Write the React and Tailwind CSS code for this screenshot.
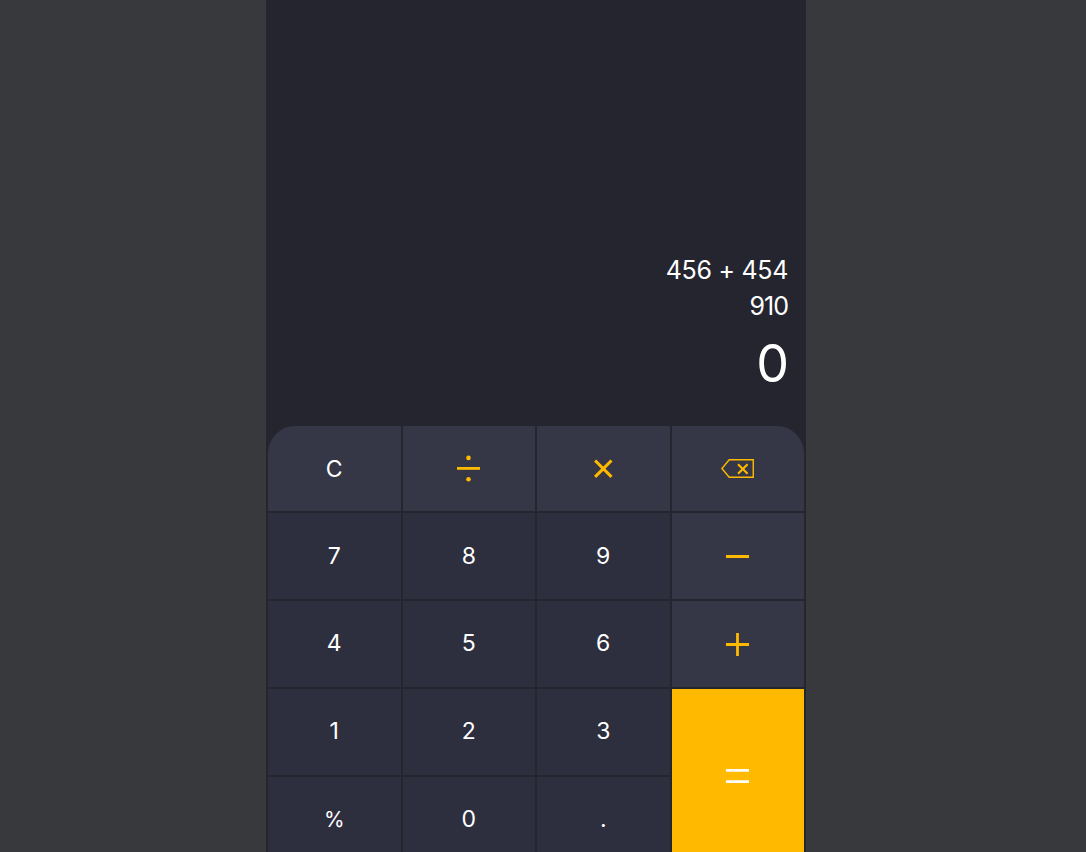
import React from "react";

const Divide = () => (
  <svg width="23" height="27" viewBox="0 0 23 27" fill="#ffba00">
    <path d="M0 12h23v2.8H0z" />
    <circle cx="11.5" cy="2.9" r="2.3" />
    <circle cx="11.5" cy="24.2" r="2.3" />
  </svg>
);

const Multiply = () => (
  <svg width="19" height="19" viewBox="0 0 19 19" stroke="#ffba00" strokeWidth="3" fill="none">
    <path d="M1.1 1.5l16.4 16.4M17.5 1.5L1.1 17.9" />
  </svg>
);

const Backspace = () => (
  <svg width="33" height="19" viewBox="0 0 33 19" stroke="#ffba00" fill="none">
    <path strokeWidth="1.4" d="M8.2 .7H32.25V18.3H8.2L.9 9.5z" />
    <path strokeWidth="2.1" d="M17 5.2l9.6 9.6M26.6 5.2L17 14.8" />
  </svg>
);

const Minus = () => (
  <svg width="23" height="3" viewBox="0 0 23 3" fill="#ffba00">
    <path d="M0 0h23v3H0z" />
  </svg>
);

const Plus = () => (
  <svg width="23" height="23" viewBox="0 0 23 23" fill="#ffba00">
    <path d="M0 10.1h23v2.8H0zM10.1 0h2.8v23h-2.8z" />
  </svg>
);

const Equals = () => (
  <svg width="23" height="14" viewBox="0 0 23 14" fill="#fff">
    <path d="M0 0h23v2.8H0zM0 11.2h23V14H0z" />
  </svg>
);

const number = "bg-[#2d2e3e] text-[23px]";
const action = "bg-[#363746] text-[23px]";

const keys = [
  { label: "C", style: `${action} rounded-tl-[27px]` },
  { name: "divide", icon: <Divide />, style: action },
  { name: "multiply", icon: <Multiply />, style: action },
  { name: "backspace", icon: <Backspace />, style: `${action} rounded-tr-[27px]` },
  { label: "7", style: number },
  { label: "8", style: number },
  { label: "9", style: number },
  { name: "minus", icon: <Minus />, style: `${action} pt-px` },
  { label: "4", style: `${number} pb-0.5` },
  { label: "5", style: `${number} pb-0.5` },
  { label: "6", style: `${number} pb-0.5` },
  { name: "plus", icon: <Plus />, style: `${action} pt-px` },
  { label: "1", style: `${number} pb-0.5` },
  { label: "2", style: `${number} pb-0.5` },
  { label: "3", style: `${number} pb-0.5` },
  { name: "equals", icon: <Equals />, style: "bg-[#ffba00] row-span-2" },
  { label: "%", style: "bg-[#2d2e3e] text-[21px]" },
  { label: "0", style: `${number} pb-0.5` },
  { label: ".", style: `${number} pb-0.5` },
];

export default function App() {
  return (
    <div className="h-screen overflow-hidden bg-[#38393c] pl-[266px] font-['Inter',sans-serif] text-white">
      <main className="flex h-[865px] w-[540px] flex-col bg-[#252530] px-0.5">
        <section className="flex h-[426px] shrink-0 flex-col items-end justify-end pr-4 pb-[26px]">
          <div className="text-[25px] leading-9 tracking-[-0.3px]">456 + 454</div>
          <div className="text-[25px] leading-9 tracking-[-1px]">910</div>
          <div className="-mr-px pt-1 text-[52px] leading-[72px]">0</div>
        </section>
        <section className="grid grid-cols-4 grid-rows-[85px_86px_86px_86px_86px] gap-0.5">
          {keys.map((key) => (
            <button
              key={key.label || key.name}
              aria-label={key.name}
              className={`flex items-center justify-center leading-8 ${key.style}`}
            >
              {key.icon || key.label}
            </button>
          ))}
        </section>
      </main>
    </div>
  );
}
